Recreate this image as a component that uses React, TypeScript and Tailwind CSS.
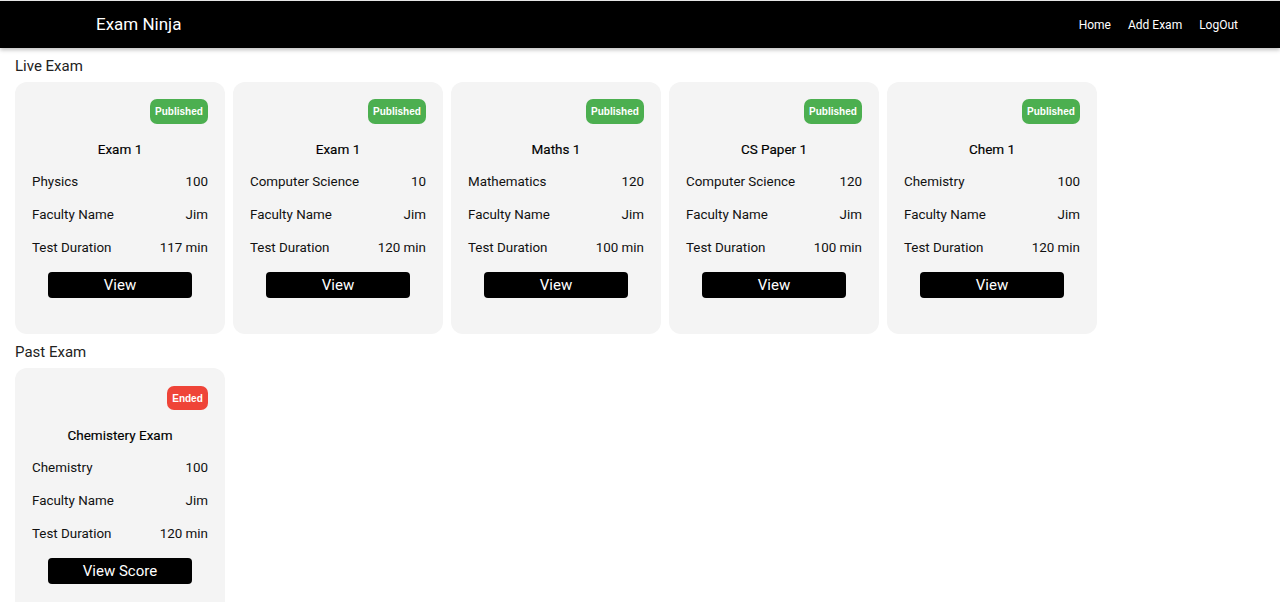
import React from 'react';

type Exam = {
  title: string;
  subject: string;
  marks: number;
  faculty: string;
  duration: string;
};

const liveExams: Exam[] = [
  { title: 'Exam 1', subject: 'Physics', marks: 100, faculty: 'Jim', duration: '117 min' },
  { title: 'Exam 1', subject: 'Computer Science', marks: 10, faculty: 'Jim', duration: '120 min' },
  { title: 'Maths 1', subject: 'Mathematics', marks: 120, faculty: 'Jim', duration: '100 min' },
  { title: 'CS Paper 1', subject: 'Computer Science', marks: 120, faculty: 'Jim', duration: '100 min' },
  { title: 'Chem 1', subject: 'Chemistry', marks: 100, faculty: 'Jim', duration: '120 min' },
];

const pastExams: Exam[] = [
  { title: 'Chemistery Exam', subject: 'Chemistry', marks: 100, faculty: 'Jim', duration: '120 min' },
];

const ExamCard: React.FC<{ exam: Exam; ended?: boolean }> = ({ exam, ended }) => (
  <div className="w-[210px] shrink-0 bg-[#f4f4f4] rounded-[12px] px-[17px] pt-[17px] pb-[36px] flex flex-col">
    <div className="flex justify-end">
      {ended ? (
        <span className="h-[24px] w-[41px] mt-[1px] rounded-[7px] bg-[#ef4438] text-white text-[10px] font-bold flex items-center justify-center font-['Liberation_Sans',sans-serif]">
          Ended
        </span>
      ) : (
        <span className="h-[25px] w-[58px] rounded-[7px] bg-[#4caf50] text-white text-[10px] font-bold flex items-center justify-center font-['Liberation_Sans',sans-serif]">
          Published
        </span>
      )}
    </div>
    <h3 className="mt-[15px] text-center text-[13.5px] leading-5 text-black [-webkit-text-stroke:0.15px_black]">{exam.title}</h3>
    <div className="mt-[13px] flex flex-col gap-[13px] text-[13.4px] leading-5 text-[#111]">
      <div className="flex justify-between">
        <span>{exam.subject}</span>
        <span>{exam.marks}</span>
      </div>
      <div className="flex justify-between">
        <span>Faculty Name</span>
        <span>{exam.faculty}</span>
      </div>
      <div className="flex justify-between">
        <span>Test Duration</span>
        <span>{exam.duration}</span>
      </div>
    </div>
    <button className="mt-[14px] mx-auto w-[144px] h-[26px] bg-black text-white text-[15px] rounded-[4px] flex items-center justify-center">
      {ended ? 'View Score' : 'View'}
    </button>
  </div>
);

const App: React.FC = () => {
  return (
    <div className="min-h-screen bg-white font-['Roboto',sans-serif] text-[#1f1f1f]">
      {/* top bar */}
      <nav className="h-[48px] bg-black flex items-center justify-between pl-[96px] pr-[42px] shadow-[0_2px_4px_rgba(0,0,0,0.25)] border-t border-[#e5e5e5]">
        <span className="text-white text-[17px]">Exam Ninja</span>
        <div className="flex items-center gap-[17px] text-white text-[12px]">
          <a href="#">Home</a>
          <a href="#">Add Exam</a>
          <a href="#">LogOut</a>
        </div>
      </nav>

      <main className="px-[15px]">
        <h2 className="pt-[8px] text-[15px] leading-5 text-[#222]">Live Exam</h2>
        <div className="mt-[6px] flex gap-[8px]">
          {liveExams.map((exam, i) => (
            <ExamCard key={i} exam={exam} />
          ))}
        </div>

        <h2 className="mt-[8px] text-[15px] leading-5 text-[#222]">Past Exam</h2>
        <div className="mt-[6px] flex gap-[8px]">
          {pastExams.map((exam, i) => (
            <ExamCard key={i} exam={exam} ended />
          ))}
        </div>
      </main>
    </div>
  );
};

export default App;
